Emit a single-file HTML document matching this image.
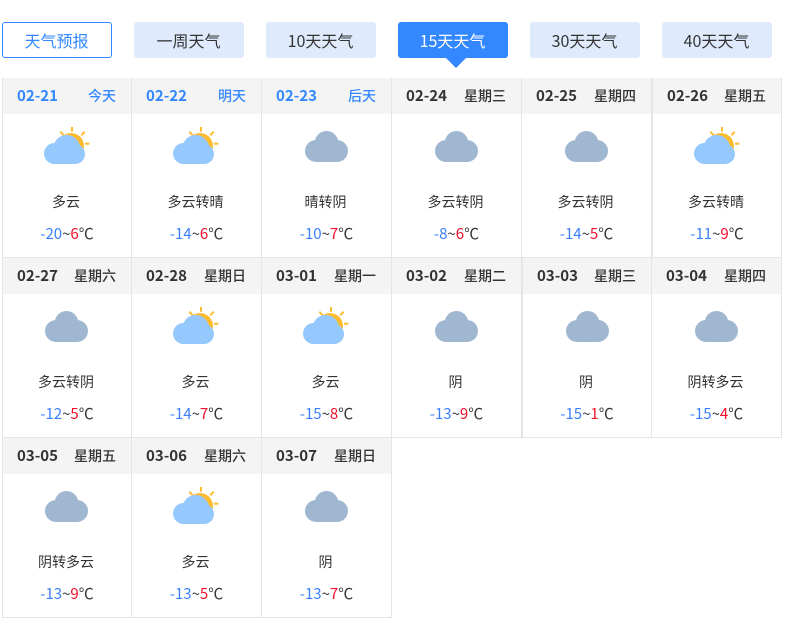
<!DOCTYPE html>
<html lang="zh">
<head>
<meta charset="utf-8">
<title>15天天气</title>
<style>
*{box-sizing:border-box;margin:0;padding:0}
html,body{width:791px;height:627px;background:#fff;overflow:hidden}
body{position:relative;font-family:"Noto Sans CJK SC","Liberation Sans",sans-serif;color:#333}
.tab{position:absolute;top:22px;width:110px;height:36px;line-height:37px;text-align:center;font-size:16px;background:#dfebfd;border-radius:3px;color:#333;padding-right:1px}
.tab.o{background:#fff;border:1px solid #3388ff;color:#3388ff;line-height:35px}
.tab.a{background:#3388ff;color:#fff}
.arr{position:absolute;left:446px;top:58px;width:0;height:0;border-left:10px solid transparent;border-right:10px solid transparent;border-top:10px solid #3388ff}
.c{position:absolute;height:180px;border:1px solid #e5e5e5;border-top:0;text-align:center}
.h{position:absolute;left:0;right:0;top:0;height:36px;background:#f4f4f4;display:flex;justify-content:space-between;align-items:center;padding:0 15px 0 14px;font-size:14px;font-weight:500;line-height:36px;color:#333}
.h b{font-weight:700;font-size:15px}
.h.t{color:#3388ff}
.i{position:absolute;width:46px;height:40px}
.w{position:absolute;left:0;right:0;top:114px;line-height:21px;font-size:14px;color:#333;padding-right:2px}
.p{position:absolute;left:0;right:0;top:146px;line-height:20px;font-size:15px;color:#333}
.p i{font-style:normal;color:#3a7ffb}
.p u{text-decoration:none;color:#f2102c}
</style>
</head>
<body>
<svg width="0" height="0" style="position:absolute">
<symbol id="s" viewBox="0 0 46 40">
<circle cx="27" cy="20" r="13" fill="#fdbc2f"/>
<g stroke="#fdbc2f" stroke-width="2" fill="none">
<path d="M28 1V5.700"/><path d="M16.300 5.700L19.700 9.300"/><path d="M40.700 5.700L37.300 9.300"/><path d="M41 17.700H45.300"/>
</g>
<path fill="#95c8fd" d="M10.500 38A10.500 10.500 0 0 1 10.500 17Q11 17 10.500 17C13 12 17 9 22.700 9C29 9 34 13 36 19.500C39 21 41 25 41 28C41 33.500 36.500 38 31 38Z"/>
</symbol>
<symbol id="g" viewBox="0 0 46 40">
<g fill="#9fb7d1">
<circle cx="11" cy="25" r="11"/><circle cx="21.500" cy="16.800" r="11.800"/><circle cx="32" cy="25" r="11"/>
<rect x="11" y="18" width="21" height="18"/>
</g>
</symbol>
</svg>

<div class="tab o" style="left:2px">天气预报</div>
<div class="tab" style="left:134px">一周天气</div>
<div class="tab" style="left:266px">10天天气</div>
<div class="tab a" style="left:398px">15天天气</div>
<div class="arr"></div>
<div class="tab" style="left:530px">30天天气</div>
<div class="tab" style="left:662px">40天天气</div>

<div class="c" style="left:2px;top:78px;width:130px"><div class="h t"><b>02-21</b><span>今天</span></div><svg class="i" style="left:41px;top:48px"><use href="#s"/></svg><div class="w">多云</div><div class="p"><i>-20</i>~<u>6</u>℃</div></div>
<div class="c" style="left:131px;top:78px;width:131px"><div class="h t"><b>02-22</b><span>明天</span></div><svg class="i" style="left:41px;top:48px"><use href="#s"/></svg><div class="w">多云转晴</div><div class="p"><i>-14</i>~<u>6</u>℃</div></div>
<div class="c" style="left:261px;top:78px;width:131px"><div class="h t"><b>02-23</b><span>后天</span></div><svg class="i" style="left:43px;top:48px"><use href="#g"/></svg><div class="w">晴转阴</div><div class="p"><i>-10</i>~<u>7</u>℃</div></div>
<div class="c" style="left:391px;top:78px;width:131px"><div class="h"><b>02-24</b><span>星期三</span></div><svg class="i" style="left:43px;top:48px"><use href="#g"/></svg><div class="w">多云转阴</div><div class="p"><i>-8</i>~<u>6</u>℃</div></div>
<div class="c" style="left:521px;top:78px;width:131px"><div class="h"><b>02-25</b><span>星期四</span></div><svg class="i" style="left:43px;top:48px"><use href="#g"/></svg><div class="w">多云转阴</div><div class="p"><i>-14</i>~<u>5</u>℃</div></div>
<div class="c" style="left:652px;top:78px;width:130px"><div class="h"><b>02-26</b><span>星期五</span></div><svg class="i" style="left:41px;top:48px"><use href="#s"/></svg><div class="w">多云转晴</div><div class="p"><i>-11</i>~<u>9</u>℃</div></div>

<div class="c" style="left:2px;top:258px;width:130px"><div class="h"><b>02-27</b><span>星期六</span></div><svg class="i" style="left:42px;top:48px"><use href="#g"/></svg><div class="w">多云转阴</div><div class="p"><i>-12</i>~<u>5</u>℃</div></div>
<div class="c" style="left:131px;top:258px;width:131px"><div class="h"><b>02-28</b><span>星期日</span></div><svg class="i" style="left:41px;top:48px"><use href="#s"/></svg><div class="w">多云</div><div class="p"><i>-14</i>~<u>7</u>℃</div></div>
<div class="c" style="left:261px;top:258px;width:131px"><div class="h"><b>03-01</b><span>星期一</span></div><svg class="i" style="left:41px;top:48px"><use href="#s"/></svg><div class="w">多云</div><div class="p"><i>-15</i>~<u>8</u>℃</div></div>
<div class="c" style="left:391px;top:258px;width:131px"><div class="h"><b>03-02</b><span>星期二</span></div><svg class="i" style="left:43px;top:48px"><use href="#g"/></svg><div class="w">阴</div><div class="p"><i>-13</i>~<u>9</u>℃</div></div>
<div class="c" style="left:522px;top:258px;width:130px"><div class="h"><b>03-03</b><span>星期三</span></div><svg class="i" style="left:43px;top:48px"><use href="#g"/></svg><div class="w">阴</div><div class="p"><i>-15</i>~<u>1</u>℃</div></div>
<div class="c" style="left:651px;top:258px;width:131px"><div class="h"><b>03-04</b><span>星期四</span></div><svg class="i" style="left:43px;top:48px"><use href="#g"/></svg><div class="w">阴转多云</div><div class="p"><i>-15</i>~<u>4</u>℃</div></div>

<div class="c" style="left:2px;top:438px;width:130px"><div class="h"><b>03-05</b><span>星期五</span></div><svg class="i" style="left:42px;top:48px"><use href="#g"/></svg><div class="w">阴转多云</div><div class="p"><i>-13</i>~<u>9</u>℃</div></div>
<div class="c" style="left:131px;top:438px;width:131px"><div class="h"><b>03-06</b><span>星期六</span></div><svg class="i" style="left:41px;top:48px"><use href="#s"/></svg><div class="w">多云</div><div class="p"><i>-13</i>~<u>5</u>℃</div></div>
<div class="c" style="left:261px;top:438px;width:131px"><div class="h"><b>03-07</b><span>星期日</span></div><svg class="i" style="left:43px;top:48px"><use href="#g"/></svg><div class="w">阴</div><div class="p"><i>-13</i>~<u>7</u>℃</div></div>
</body>
</html>
